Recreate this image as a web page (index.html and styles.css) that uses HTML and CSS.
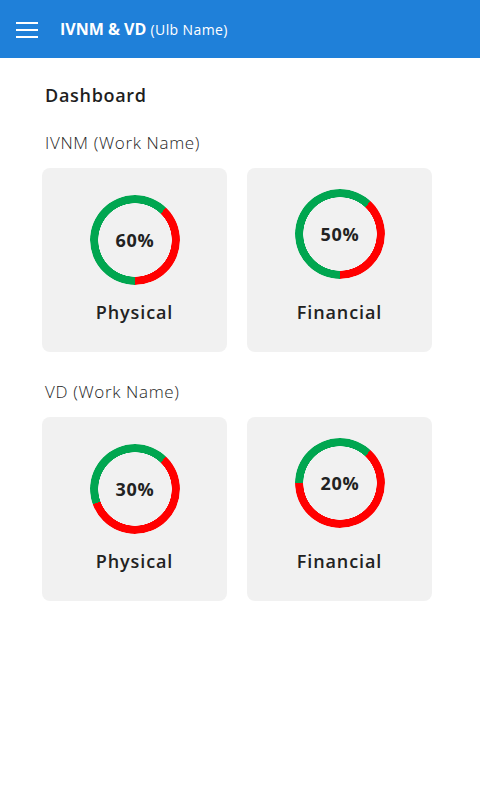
FILE: index.html
```html
<!DOCTYPE html>
<html lang="en">
<head>
<meta charset="utf-8">
<title>Dashboard</title>
<link rel="stylesheet" href="styles.css">
</head>
<body>
<header class="appbar">
  <svg class="menu" width="22" height="16" viewBox="0 0 22 16" aria-hidden="true">
    <rect x="0" y="0" width="22" height="2" fill="#fff"/>
    <rect x="0" y="7" width="22" height="2" fill="#fff"/>
    <rect x="0" y="14" width="22" height="2" fill="#fff"/>
  </svg>
  <h1 class="title">IVNM &amp; VD <span class="sub">(Ulb Name)</span></h1>
</header>
<main class="content">
  <h2 class="page-title">Dashboard</h2>

  <section class="work">
    <h3 class="work-name">IVNM (Work Name)</h3>
    <div class="cards">
      <div class="card card-physical">
        <div class="donut" style="--start:180deg;--span:224deg"><span class="pct">60%</span></div>
        <div class="label">Physical</div>
      </div>
      <div class="card card-financial">
        <div class="donut" style="--start:180deg;--span:223deg"><span class="pct">50%</span></div>
        <div class="label">Financial</div>
      </div>
    </div>
  </section>

  <section class="work">
    <h3 class="work-name">VD (Work Name)</h3>
    <div class="cards">
      <div class="card card-physical">
        <div class="donut" style="--start:250deg;--span:154deg"><span class="pct">30%</span></div>
        <div class="label">Physical</div>
      </div>
      <div class="card card-financial">
        <div class="donut" style="--start:270deg;--span:133deg"><span class="pct">20%</span></div>
        <div class="label">Financial</div>
      </div>
    </div>
  </section>
</main>
</body>
</html>
```

FILE: styles.css
```css
* { box-sizing: border-box; }
html, body { margin: 0; padding: 0; }
body {
  font-family: "Open Sans", "DejaVu Sans", sans-serif;
  color: #222;
  background: #fff;
  width: 480px;
  min-height: 802px;
}
.appbar {
  height: 58px;
  background: #1f80d9;
  display: flex;
  align-items: center;
  padding-left: 16px;
  gap: 22px;
}
.menu { display: block; margin-top: 1px; }
.title {
  margin: 0;
  color: #fff;
  font-size: 16px;
  font-weight: 700;
  letter-spacing: 0;
}
.title .sub {
  font-weight: 400;
  font-size: 14px;
  letter-spacing: 0.4px;
}
.content {
  padding: 26px 0 0 42px;
}
.page-title {
  margin: 0 0 0 3px;
  font-size: 18px;
  font-weight: 600;
  line-height: 22px;
  letter-spacing: 0.7px;
  color: #1e1e1e;
}
.work { margin-top: 26px; }
.work + .work { margin-top: 29px; }
.work-name {
  margin: 0 0 14px 3px;
  font-size: 17px;
  font-weight: 300;
  line-height: 22px;
  letter-spacing: 0.65px;
  color: #1e1e1e;
}
.cards {
  display: flex;
  gap: 20px;
}
.card {
  width: 185px;
  height: 184px;
  background: #f1f1f1;
  border-radius: 8px;
  display: flex;
  flex-direction: column;
  align-items: center;
}
.card-physical { padding-top: 27px; }
.card-financial { padding-top: 21px; }
.donut {
  width: 90px;
  height: 90px;
  border-radius: 50%;
  position: relative;
  display: flex;
  align-items: center;
  justify-content: center;
}
.donut::before {
  content: "";
  position: absolute;
  inset: 0;
  border-radius: 50%;
  background: conic-gradient(from var(--start), #00a650 0 var(--span), #ff0000 var(--span) 360deg);
  -webkit-mask: radial-gradient(circle, transparent 36.5px, #000 37px);
  mask: radial-gradient(circle, transparent 36.5px, #000 37px);
}
.pct {
  position: relative;
  font-size: 18px;
  font-weight: 700;
  letter-spacing: 0.8px;
  margin-left: 1px;
  color: #222;
}
.label {
  margin-top: auto;
  margin-bottom: 29px;
  font-size: 18px;
  font-weight: 600;
  line-height: 22px;
  letter-spacing: 0.9px;
  color: #222;
}
```
